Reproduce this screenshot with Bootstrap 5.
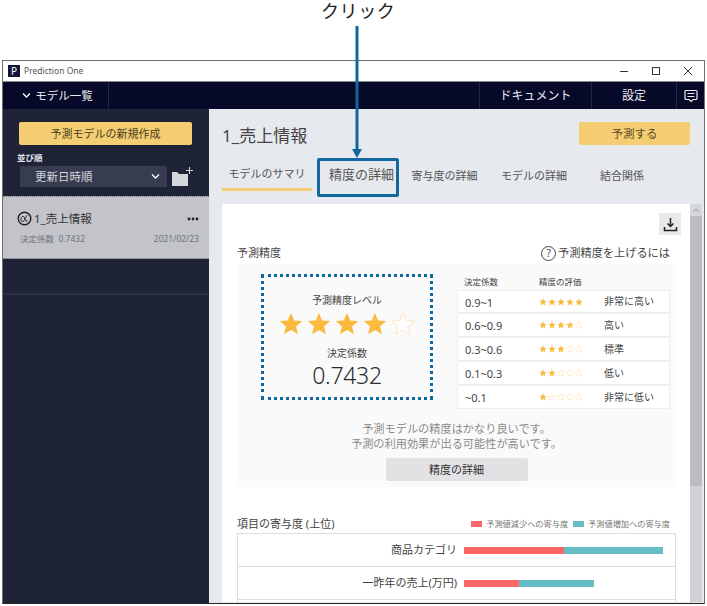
<!DOCTYPE html>
<html lang="ja">
<head>
  <meta charset="UTF-8" />
  <meta name="viewport" content="width=device-width, initial-scale=1.0" />
  <title>Prediction One</title>
  <link href="https://cdn.jsdelivr.net/npm/bootstrap@5.3.3/dist/css/bootstrap.min.css" rel="stylesheet">
  <style>
    html, body { height: 606px; overflow: hidden; background: #fff; }
    body { font-family: "Noto Sans", "Noto Sans CJK JP", sans-serif; color: #333; position: relative; }

    /* annotation above the window */
    .click-label { height: 60px; padding: 0 0 0 321px; font-size: 18px; line-height: 22px; color: #222; letter-spacing: .6px; }
    .click-arrow { position: absolute; left: 351px; top: 26px; width: 12px; height: 132px; z-index: 5; }
    .click-box { position: absolute; left: 317px; top: 158px; width: 82px; height: 39px; border: 3px solid #11689f; border-radius: 2px; z-index: 5; }

    /* window */
    .app-window { margin-left: 2px; width: 703px; height: 544px; border: 1px solid #6f6f6f; border-bottom-color: #222; overflow: hidden; }
    .title-bar { height: 21px; background: #fff; border-bottom: 1px solid #8a8a8a; font-size: 8.5px; color: #555; padding-left: 5px; }
    .app-logo { width: 12px; height: 12px; background: #11163a; color: #fff; font-size: 10px; line-height: 12px; text-align: center; margin-right: 4px; }
    .win-btns { gap: 0; margin-left: auto; }
    .win-btn { width: 32px; height: 20px; display: flex; align-items: center; justify-content: center; }

    .top-bar { height: 27px; background: #060a28; color: #e8e9ee; font-size: 12px; padding: 0; }
    .top-cell { height: 27px; display: flex; align-items: center; justify-content: center; border-left: 1px solid #23274a; }
    .top-first { width: 106px; border-left: 0; border-right: 1px solid #23274a; gap: 4px; padding-left: 4px; font-size: 11.500px; }
    .top-doc { width: 112px; }
    .top-set { width: 85px; }
    .top-msg { width: 28px; }

    .app-body { height: 494px; }
    .side-pane { width: 206px; background: #1f2338; flex-shrink: 0; }
    .new-model-btn { display: block; width: 173px; height: 23px; margin: 13px 0 0 16px; padding: 0; font-size: 11px; line-height: 23px; background: #f5cd72; border: 0; border-radius: 2px; color: #4a3d20; }
    .sort-label { font-size: 8.5px; font-weight: 700; color: #e3e4ea; margin: 6px 0 0 14px; line-height: 13px; }
    .sort-row { margin: 2px 0 0 17px; gap: 5px; }
    .sort-select { width: 147px; height: 21px; background: #383c50; color: #d5d6dc; font-size: 11.5px; padding: 0 7px 0 15px; }
    .model-item { height: 63px; margin-top: 9px; background: #c2c4c9; border-top: 1px dotted #777; border-bottom: 1px solid #8f929c; padding: 13px 10px 0 14px; color: #333; }
    .model-name { font-size: 11.5px; line-height: 17px; gap: 2px; }
    .model-meta { font-size: 8.5px; color: #70737c; margin-top: 6px; padding-left: 3px; }
    .side-line { height: 2px; background: #2c3045; margin-top: 34px; }

    .main-pane { background: #e6e9ee; min-width: 0; padding: 13px 2px 0 13px; }
    .page-title { font-size: 17px; line-height: 23px; color: #444; margin: 0; font-weight: 400; padding-top: 2px; }
    .predict-btn { width: 111px; height: 23px; margin-right: 12px; padding: 0; font-size: 11.5px; line-height: 23px; background: #f5cd72; border: 0; border-radius: 2px; color: #5a4a25; }
    .tab-row { margin-top: 10px; height: 34px; font-size: 11px; color: #555; }
    .tab-item { height: 34px; display: flex; align-items: center; justify-content: center; padding-top: 4px; white-space: nowrap; flex-shrink: 0; }
    .tab-on { width: 90px; border-bottom: 3px solid #f5cd72; }
    .tab-b { width: 99px; font-size: 13px; padding-top: 2px; }
    .tab-c { width: 67px; }
    .tab-d { width: 112px; }
    .tab-e { width: 64px; }

    .panel-wrap { margin-top: 13px; height: 398px; background: #fff; }
    .panel-inner { padding: 9px 14px 0 15px; min-width: 0; overflow: hidden; }
    .dl-btn { width: 22px; height: 22px; background: #e9e9eb; margin-left: auto; margin-right: -5px; display: flex; align-items: center; justify-content: center; }
    .sect-head { font-size: 11px; line-height: 16px; color: #444; margin-top: 10px; }
    .help-mark { width: 15px; height: 15px; border: 1px solid #444; border-radius: 50%; font-size: 10px; line-height: 13px; text-align: center; display: inline-block; margin-right: 2px; }
    .help-link { font-size: 11.2px; margin-right: 6px; }

    .acc-box { background: #fafafa; height: 223px; margin-top: 3px; padding-top: 10px; }
    .acc-top { padding-left: 24px; }
    .level-box { width: 172px; height: 126px; border: 3px dotted #11689f; text-align: center; padding-top: 16px; flex-shrink: 0; }
    .level-cap { font-size: 10px; line-height: 14px; color: #444; }
    .level-stars { gap: 4px; margin-top: 5px; height: 26px; }
    .level-num { font-size: 23px; line-height: 30px; font-weight: 300; letter-spacing: -.3px; color: #2b2b33; }
    .level-cap2 { margin-top: 8px; }

    .rank-wrap { margin-left: 24px; width: 213px; margin-top: 2px; }
    .rank-head { font-size: 8.5px; line-height: 12px; color: #444; padding: 0 0 2px 7px; height: 14px; }
    .rank-head span:first-child { width: 75px; }
    .rank-table { background: #fff; border: 1px solid #eceef2; font-size: 10px; color: #444; }
    .rank-row { height: 24px; border-bottom: 2px solid #eef0f4; padding-left: 7px; }
    .rank-row:first-child { height: 23px; }
    .rank-row:last-child { border-bottom: 0; height: 22px; }
    .rank-val { width: 74px; font-size: 11px; padding-top: 3px; }
    .rank-stars { width: 65px; gap: 1px; }
    .acc-note { font-size: 11.2px; line-height: 15px; color: #8a8a8a; text-align: center; margin-top: 12px; }
    .detail-btn { display: block; width: 142px; height: 23px; margin: 7px auto 0; padding: 0; font-size: 11px; line-height: 23px; background: #e2e2e5; border: 0; border-radius: 2px; color: #333; }

    .contrib-head { margin-top: 29px; height: 16px; }
    .contrib-title { font-size: 11px; color: #444; }
    .legend-row { font-size: 8.2px; color: #777; gap: 5px; padding-right: 6px; }
    .swatch { width: 11px; height: 6px; display: inline-block; margin-right: 4px; }
    .sw-down { background: #ff6666; }
    .sw-up { background: #66bdc6; }
    .contrib-table { border: 1px solid #dcdde1; border-bottom: 0; margin-top: 1px; }
    .contrib-row { height: 33px; border-bottom: 1px solid #dcdde1; }
    .contrib-label { width: 219px; text-align: right; font-size: 11px; color: #444; flex-shrink: 0; }
    .contrib-bar { height: 7px; margin-left: 7px; }
    .contrib-bar i { display: block; height: 100%; }

    .scroll-bar { width: 12px; flex-shrink: 0; background: #d0d1d6; }
    .scroll-end { height: 12px; background: #d6d7db; display: flex; align-items: center; justify-content: center; }
    .scroll-thumb { height: 270px; background: #bcbdc2; }
  </style>
</head>
<body>
  <svg width="0" height="0" class="d-block" aria-hidden="true">
    <defs>
      <path id="star" d="M12 1l3.200 7.400 8 .7-6.100 5.300 1.900 7.900L12 18.100l-7 4.200 1.900-7.900L.8 9.100l8-.7z"/>
    </defs>
  </svg>

  <!-- annotation -->
  <div class="click-label">クリック</div>
  <svg class="click-arrow" viewBox="0 0 12 132"><rect x="4.500" y="0" width="3" height="124" fill="#11689f"/><path d="M1 123h10l-5 9z" fill="#11689f"/></svg>
  <div class="click-box"></div>

  <div class="app-window d-flex flex-column">
    <!-- title bar -->
    <div class="title-bar d-flex align-items-center">
      <span class="app-logo">P</span>
      <span>Prediction One</span>
      <div class="win-btns d-flex">
        <span class="win-btn"><svg width="10" height="10"><path d="M1 5.500h8" stroke="#333"/></svg></span>
        <span class="win-btn"><svg width="10" height="10"><rect x="1.500" y="1.500" width="7" height="7" fill="none" stroke="#333"/></svg></span>
        <span class="win-btn"><svg width="10" height="10"><path d="M1 1l8 8M9 1l-8 8" stroke="#333"/></svg></span>
      </div>
    </div>

    <!-- top navigation -->
    <nav class="navbar top-bar flex-nowrap">
      <div class="top-cell top-first">
        <svg width="9" height="7" viewBox="0 0 9 7"><path d="M1 1.500l3.500 3.500L8 1.500" fill="none" stroke="#fff" stroke-width="1.300"/></svg>
        <span>モデル一覧</span>
      </div>
      <div class="d-flex ms-auto">
        <div class="top-cell top-doc">ドキュメント</div>
        <div class="top-cell top-set">設定</div>
        <div class="top-cell top-msg">
          <svg width="14" height="14" viewBox="0 0 14 14"><path d="M2 1.500h10a1 1 0 0 1 1 1v7a1 1 0 0 1-1 1H9l-2 2-2-2H2a1 1 0 0 1-1-1v-7a1 1 0 0 1 1-1z" fill="none" stroke="#e8e9ee" stroke-width="1.200"/><path d="M3.500 4.500h7M3.500 7.500h7" stroke="#e8e9ee"/></svg>
        </div>
      </div>
    </nav>

    <div class="app-body d-flex">
      <!-- left pane -->
      <aside class="side-pane">
        <button class="btn new-model-btn" type="button">予測モデルの新規作成</button>
        <div class="sort-label">並び順</div>
        <div class="sort-row d-flex align-items-center">
          <div class="sort-select d-flex align-items-center justify-content-between">
            <span>更新日時順</span>
            <svg width="9" height="7" viewBox="0 0 9 7"><path d="M1 1.500l3.500 3.500L8 1.500" fill="none" stroke="#fff" stroke-width="1.300"/></svg>
          </div>
          <svg width="21" height="20" viewBox="0 0 21 20"><path d="M0 5h5l2 2h9v12H0z" fill="#d5d6da"/><path d="M17.500 0v7M14 3.500h7" stroke="#d5d6da" stroke-width="1.100"/></svg>
        </div>
        <div class="model-item">
          <div class="model-name d-flex align-items-center">
            <svg width="15" height="15" viewBox="0 0 15 15"><circle cx="7.500" cy="7.500" r="6.300" fill="none" stroke="#222" stroke-width="1.400"/><path d="M10.500 4.500c-2 0-2.500 6-5 6-1.500 0-1.800-1.500-1.500-3 .3-1.500 1.500-2.500 2.500-2 1.500.7 1.500 5 4 5" fill="none" stroke="#222"/></svg>
            <span>1_売上情報</span>
            <svg class="ms-auto" width="12" height="4" viewBox="0 0 12 4"><circle cx="2" cy="2" r="1.400" fill="#222"/><circle cx="6" cy="2" r="1.400" fill="#222"/><circle cx="10" cy="2" r="1.400" fill="#222"/></svg>
          </div>
          <div class="model-meta d-flex justify-content-between">
            <span>決定係数&nbsp; 0.7432</span>
            <span>2021/02/23</span>
          </div>
        </div>
        <div class="side-line"></div>
      </aside>

      <!-- main pane -->
      <main class="main-pane flex-grow-1">
        <div class="d-flex justify-content-between align-items-start">
          <h1 class="page-title">1_売上情報</h1>
          <button class="btn predict-btn" type="button">予測する</button>
        </div>

        <div class="tab-row d-flex">
          <div class="tab-item tab-on">モデルのサマリ</div>
          <div class="tab-item tab-b">精度の詳細</div>
          <div class="tab-item tab-c">寄与度の詳細</div>
          <div class="tab-item tab-d">モデルの詳細</div>
          <div class="tab-item tab-e">結合関係</div>
        </div>

        <div class="panel-wrap d-flex">
          <div class="panel-inner flex-grow-1">
            <div class="d-flex">
              <div class="dl-btn">
                <svg width="15" height="15" viewBox="0 0 15 15"><path d="M7.500 1v8M4.500 6.500l3 3 3-3" fill="none" stroke="#222" stroke-width="1.500"/><path d="M1.500 10v3.500h12V10" fill="none" stroke="#222" stroke-width="1.500"/></svg>
              </div>
            </div>
            <div class="sect-head d-flex justify-content-between align-items-center">
              <span>予測精度</span>
              <span class="help-link d-flex align-items-center"><span class="help-mark">?</span>予測精度を上げるには</span>
            </div>

            <div class="acc-box">
              <div class="acc-top d-flex">
                <div class="level-box">
                  <div class="level-cap">予測精度レベル</div>
                  <div class="level-stars d-flex justify-content-center">
                    <svg width="24" height="24" viewBox="0 0 24 24"><use href="#star" fill="#fbbb3f"/></svg>
                    <svg width="24" height="24" viewBox="0 0 24 24"><use href="#star" fill="#fbbb3f"/></svg>
                    <svg width="24" height="24" viewBox="0 0 24 24"><use href="#star" fill="#fbbb3f"/></svg>
                    <svg width="24" height="24" viewBox="0 0 24 24"><use href="#star" fill="#fbbb3f"/></svg>
                    <svg width="24" height="24" viewBox="0 0 24 24"><use href="#star" fill="#fff" stroke="#fde5c0"/></svg>
                  </div>
                  <div class="level-cap level-cap2">決定係数</div>
                  <div class="level-num">0.7432</div>
                </div>

                <div class="rank-wrap">
                  <div class="rank-head d-flex"><span>決定係数</span><span>精度の評価</span></div>
                  <div class="rank-table" id="rankTable"></div>
                </div>
              </div>
              <div class="acc-note">予測モデルの精度はかなり良いです。<br>予測の利用効果が出る可能性が高いです。</div>
              <button class="btn detail-btn" type="button">精度の詳細</button>
            </div>

            <div class="contrib-head d-flex justify-content-between align-items-center">
              <span class="contrib-title">項目の寄与度 (上位)</span>
              <div class="legend-row d-flex align-items-center">
                <span><span class="swatch sw-down"></span>予測値減少への寄与度</span>
                <span><span class="swatch sw-up"></span>予測値増加への寄与度</span>
              </div>
            </div>
            <div class="contrib-table">
              <div class="contrib-row d-flex align-items-center">
                <div class="contrib-label">商品カテゴリ</div>
                <div class="contrib-bar d-flex"><i class="sw-down" style="width:100px"></i><i class="sw-up" style="width:99px"></i></div>
              </div>
              <div class="contrib-row d-flex align-items-center">
                <div class="contrib-label">一昨年の売上(万円)</div>
                <div class="contrib-bar d-flex"><i class="sw-down" style="width:55px"></i><i class="sw-up" style="width:75px"></i></div>
              </div>
              <div class="contrib-row"></div>
            </div>
          </div>

          <div class="scroll-bar">
            <div class="scroll-end"><svg width="8" height="5"><path d="M1 4l3-3 3 3" fill="none" stroke="#999"/></svg></div>
            <div class="scroll-thumb"></div>
          </div>
        </div>
      </main>
    </div>
  </div>

  <script>
    // 精度の評価テーブルの行を作る
    const rows = [
      ['0.9~1', 5, '非常に高い'],
      ['0.6~0.9', 4, '高い'],
      ['0.3~0.6', 3, '標準'],
      ['0.1~0.3', 2, '低い'],
      ['~0.1', 1, '非常に低い']
    ];
    const rankTable = document.getElementById('rankTable');
    rows.forEach(r => {
      let stars = '';
      for (let i = 1; i <= 5; i++) {
        const paint = i <= r[1] ? 'fill="#fbbb3f"' : 'fill="#fff" stroke="#fde5c0" stroke-width="2"';
        stars += `<svg width="8" height="8" viewBox="0 0 24 24"><use href="#star" ${paint}/></svg>`;
      }
      rankTable.insertAdjacentHTML('beforeend', `
        <div class="rank-row d-flex align-items-center">
          <span class="rank-val">${r[0]}</span>
          <span class="rank-stars d-flex">${stars}</span>
          <span>${r[2]}</span>
        </div>`);
    });
  </script>
</body>
</html>
